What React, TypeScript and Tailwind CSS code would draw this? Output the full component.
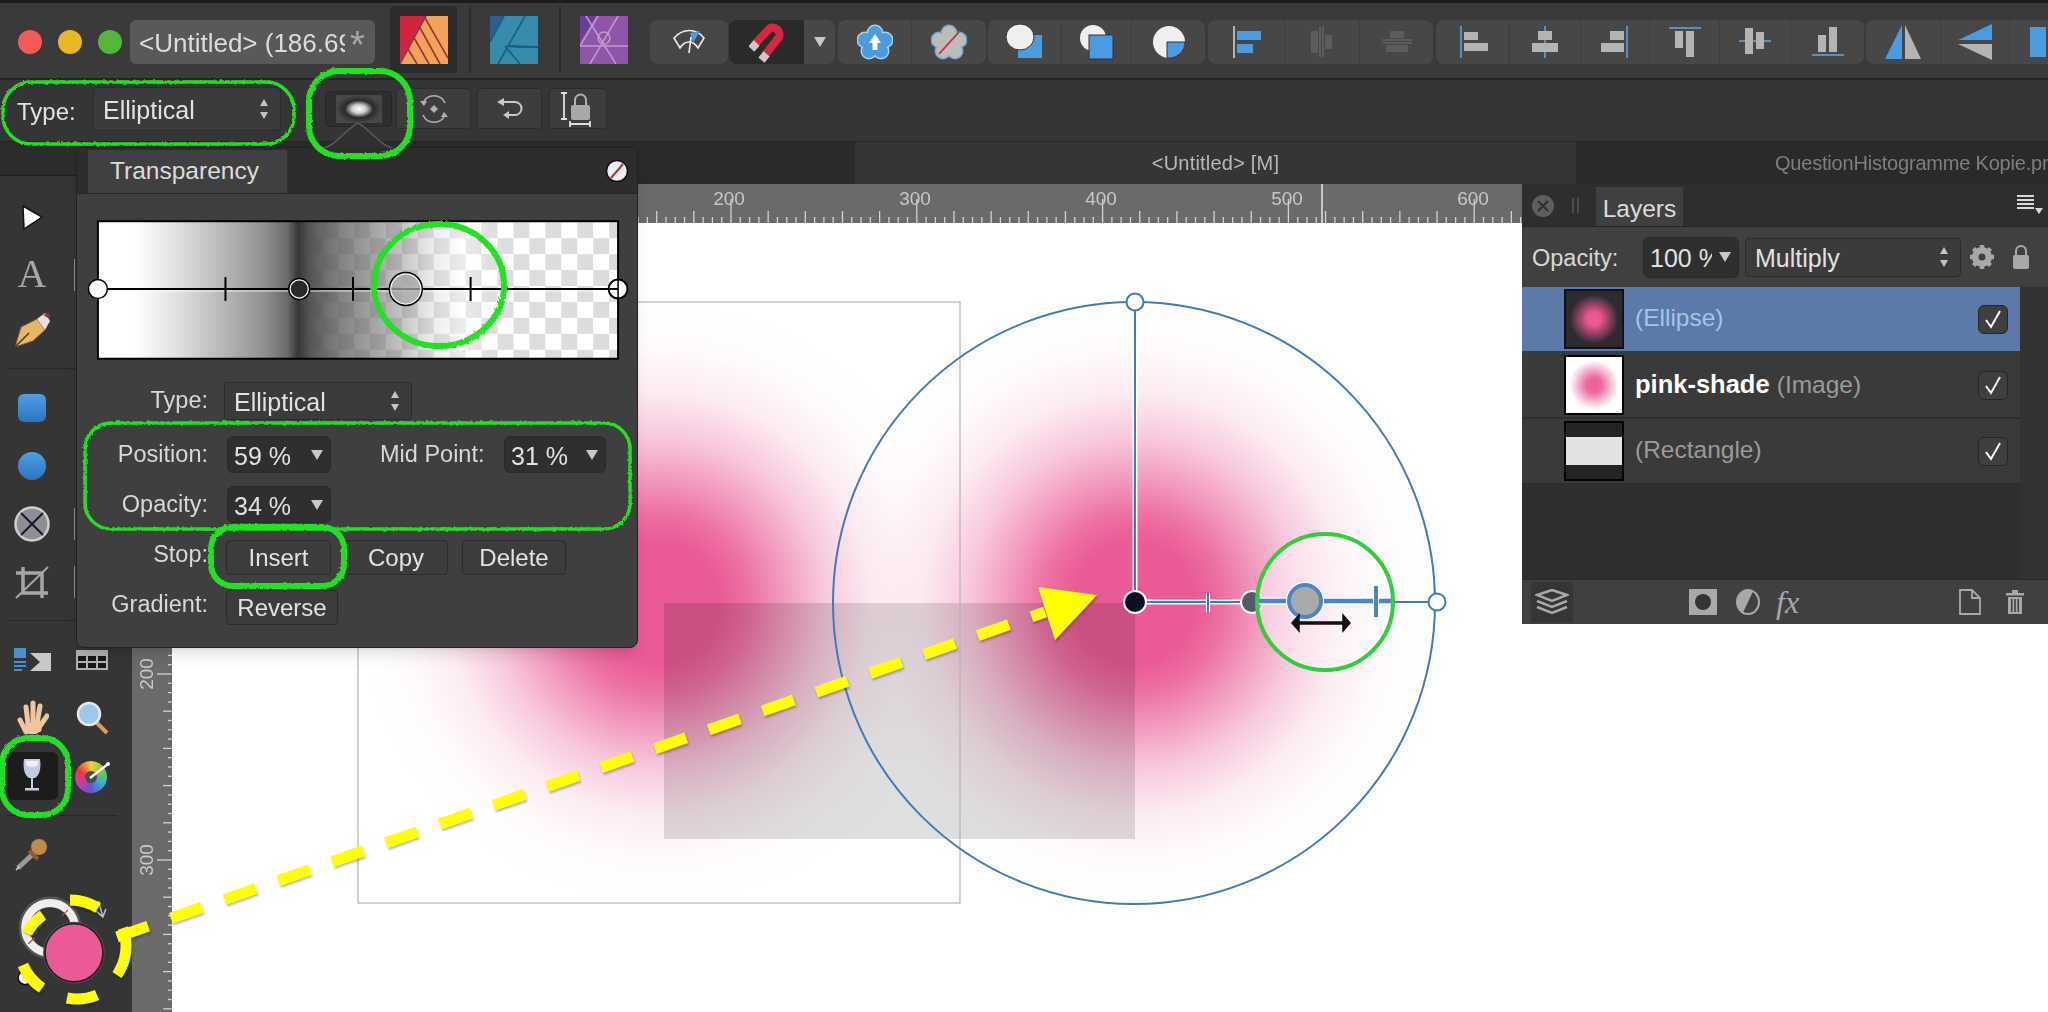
import React from 'react';

const BLUE = '#4a9be0';
const GREY = '#b4b4b4';
const DIM = '#5c5c5c';

const Tri = ({ className = '' }: { className?: string }) => (
    <svg width="12" height="10" viewBox="0 0 12 10" className={`shrink-0 ${className}`}><polygon points="0,0 12,0 6,10" fill="#c8c8c8" /></svg>
);

const UpDown = () => (
    <svg width="10" height="22" viewBox="0 0 10 22"><polygon points="5,1 9,8 1,8" fill="#c4c4c4" /><polygon points="1,14 9,14 5,21" fill="#c4c4c4" /></svg>
);

const Select = ({ label, className = '' }: { label: string; className?: string }) => (
    <div className={`flex items-center justify-between rounded bg-[#3b3b3b] border border-[#2b2b2b] pl-[9px] pr-[11px] text-[25px] text-[#e2e2e2] ${className}`}>
        <span className="pt-[4px]">{label}</span>
        <UpDown />
    </div>
);

const NumInput = ({ label, className = '', textClass = '' }: { label: string; className?: string; textClass?: string }) => (
    <div className={`flex items-center justify-between rounded-md bg-[#2f2f2f] border border-[#2a2a2a] pl-[6px] pr-[7px] text-[25px] text-[#e2e2e2] overflow-hidden whitespace-nowrap ${className}`}>
        <span className={`pt-[4px] overflow-hidden ${textClass}`}>{label}</span>
        <Tri />
    </div>
);

const Btn = ({ label, className = '' }: { label: string; className?: string }) => (
    <div className={`flex items-center justify-center rounded bg-[#3c3c3c] border border-[#2b2b2b] text-[24px] text-[#e2e2e2] h-[35px] ${className}`}>{label}</div>
);

const Group = ({ children, className = '' }: { children: React.ReactNode; className?: string }) => (
    <div className={`flex h-[44px] rounded-lg bg-[#474747] overflow-hidden shrink-0 divide-x divide-[#3c3c3c] ${className}`}>{children}</div>
);

const Cell = ({ children, className = '' }: { children?: React.ReactNode; className?: string }) => (
    <div className={`flex items-center justify-center h-full shrink-0 ${className}`}>{children}</div>
);

const Bars = ({ d, line, bar }: { d: string; line: string; bar: string }) => {
    // d: v-left, v-center, v-right, h-top, h-center, h-bottom
    const L = (x1: number, y1: number, x2: number, y2: number) => <line x1={x1} y1={y1} x2={x2} y2={y2} stroke={line} strokeWidth="2" />;
    const R = (x: number, y: number, w: number, h: number, i: number) => <rect key={i} x={x} y={y} width={w} height={h} fill={bar} />;
    const s: Record<string, React.ReactNode> = {
        vl: <>{L(5, 1, 5, 33)}{R(8, 7, 14, 8, 1)}{R(8, 18, 24, 8, 2)}</>,
        vc: <>{L(17, 1, 17, 33)}{R(10, 6, 14, 9, 1)}{R(4, 18, 26, 9, 2)}</>,
        vr: <>{L(29, 1, 29, 33)}{R(12, 6, 14, 9, 1)}{R(3, 18, 23, 9, 2)}</>,
        ht: <>{L(1, 3, 33, 3)}{R(7, 6, 8, 17, 1)}{R(18, 6, 8, 26, 2)}</>,
        hc: <>{L(1, 16, 33, 16)}{R(7, 3, 8, 26, 1)}{R(18, 7, 8, 17, 2)}</>,
        hb: <>{L(1, 30, 33, 30)}{R(7, 10, 8, 17, 1)}{R(18, 2, 8, 25, 2)}</>,
    };
    return <svg width="34" height="34" viewBox="0 0 34 34">{s[d]}</svg>;
};

const Flower = ({ fill, ring }: { fill: string; ring: string }) => (
    <>
        {[[18, 9], [28, 16], [24, 27], [12, 27], [8, 16]].map(([x, y], i) => (
            <circle key={i} cx={x} cy={y} r="8.5" fill={ring} />
        ))}
        {[[18, 9], [28, 16], [24, 27], [12, 27], [8, 16]].map(([x, y], i) => (
            <circle key={i} cx={x} cy={y} r="7" fill={fill} />
        ))}
        <circle cx="18" cy="19" r="9" fill={fill} />
    </>
);

const TopBar = () => (
    <div className="h-[78px] shrink-0 bg-[#3a3a3a] border-t-[3px] border-[#1c1c1c] flex items-start pt-[17px] overflow-hidden">
        <div className="flex gap-[16px] ml-[18px] mt-[10px] shrink-0">
            <div className="w-[24px] h-[24px] rounded-full bg-[#f35a56]" />
            <div className="w-[24px] h-[24px] rounded-full bg-[#e9b923]" />
            <div className="w-[24px] h-[24px] rounded-full bg-[#53b83a]" />
        </div>
        <div className="ml-[8px] w-[245px] h-[44px] rounded-md bg-[#595959] flex items-center pl-[9px] text-[26px] text-[#dcdcdc] overflow-hidden whitespace-nowrap shrink-0">
            <span className="w-[206px] pt-[2px] overflow-hidden shrink-0">&lt;Untitled&gt; (186.69</span>
            <span className="ml-[5px] text-[38px] leading-[38px] text-[#a8a8a8] mt-[6px]">*</span>
        </div>
        <div className="ml-[15px] -mt-[14px] w-[67px] h-[67px] rounded bg-[#2c2c2c] flex items-center justify-center shrink-0">
            <svg width="48" height="48" viewBox="0 0 48 48">
                <rect width="48" height="48" fill="#f4a15c" />
                <polygon points="0,0 26,0 0,48" fill="#d0243f" />
                <g stroke="#8c3a2e" strokeWidth="1.6">
                    <line x1="24" y1="0" x2="48" y2="42" /><line x1="19" y1="10" x2="40" y2="48" />
                    <line x1="13" y1="20" x2="29" y2="48" /><line x1="8" y1="33" x2="17" y2="48" />
                </g>
                <line x1="26" y1="0" x2="0" y2="48" stroke="#8c3a2e" strokeWidth="1.4" />
            </svg>
        </div>
        <div className="ml-[12px] -mt-[14px] w-[2px] h-[67px] bg-[#2c2c2c] shrink-0" />
        <svg width="48" height="48" viewBox="0 0 48 48" className="ml-[19px] -mt-[4px] shrink-0">
            <rect width="48" height="48" fill="#358cab" />
            <polygon points="0,0 14,0 0,24" fill="#2b5f96" />
            <g stroke="#1f5f7e" strokeWidth="1.8" fill="none">
                <line x1="35" y1="0" x2="8" y2="48" /><line x1="15" y1="30" x2="30" y2="48" />
                <polygon points="19,30 48,31 28,31" /><line x1="14" y1="0" x2="0" y2="26" />
            </g>
        </svg>
        <div className="ml-[21px] -mt-[14px] w-[2px] h-[67px] bg-[#2c2c2c] shrink-0" />
        <svg width="48" height="48" viewBox="0 0 48 48" className="ml-[19px] -mt-[4px] shrink-0">
            <rect width="48" height="48" fill="#8f55a8" />
            <polygon points="0,0 16,0 0,26" fill="#6a3e98" />
            <g stroke="#c39ad0" strokeWidth="1.5" fill="none">
                <line x1="38" y1="0" x2="10" y2="48" /><line x1="6" y1="0" x2="36" y2="48" />
                <line x1="0" y1="30" x2="48" y2="30" /><line x1="18" y1="0" x2="0" y2="30" /><circle cx="24" cy="22" r="6" />
            </g>
        </svg>
        <Group className="ml-[22px]">
            <Cell className="w-[78px]">
                <svg width="36" height="30" viewBox="0 0 36 30" fill="none" stroke="#eee" strokeWidth="1.6">
                    <path d="M3 11 C12 1 25 1 33 11 L27 21 C22 13 14 13 9 21 Z" />
                    <path d="M19 6 L29 4 L22 16" fill={BLUE} stroke="none" />
                    <line x1="20" y1="10" x2="18" y2="26" />
                </svg>
            </Cell>
        </Group>
        <Group className="ml-[1px] divide-x-0">
            <Cell className="w-[75px] bg-[#2a2a2a]">
                <svg width="36" height="42" viewBox="0 0 36 42" fill="none">
                    <path d="M6 26 L22 9 A7 7 0 0 1 31 18 L17 36" stroke="#d7263d" strokeWidth="8" transform="translate(-1 -2)" />
                    <rect x="1" y="21" width="8" height="8" fill="#d8c4c4" transform="rotate(43 5 25)" />
                    <rect x="11" y="32" width="8" height="8" fill="#d8c4c4" transform="rotate(40 15 36)" />
                </svg>
            </Cell>
            <Cell className="w-[31px]"><Tri /></Cell>
        </Group>
        <Group className="ml-[3px]">
            <Cell className="w-[74px]">
                <svg width="36" height="36" viewBox="0 0 36 36">
                    <Flower fill={BLUE} ring="#a8d0ef" />
                    <polygon points="18,10 24,19 20.5,19 20.5,26 15.5,26 15.5,19 12,19" fill="#fff" />
                </svg>
            </Cell>
            <Cell className="w-[74px]">
                <svg width="36" height="36" viewBox="0 0 36 36">
                    <Flower fill="#bcbcbc" ring="#6fa8d6" />
                    <line x1="8" y1="30" x2="28" y2="8" stroke="#c62d2d" strokeWidth="1.8" />
                </svg>
            </Cell>
        </Group>
        <Group className="ml-[2px]">
            <Cell className="w-[74px]">
                <svg width="38" height="36" viewBox="0 0 38 36">
                    <rect x="12" y="11" width="24" height="23" fill={BLUE} />
                    <ellipse cx="14" cy="13" rx="14" ry="13" fill="#efefef" stroke="#333" strokeWidth="1" />
                </svg>
            </Cell>
            <Cell className="w-[70px]">
                <svg width="38" height="36" viewBox="0 0 38 36">
                    <circle cx="15" cy="14" r="13" fill="#efefef" />
                    <rect x="11" y="11" width="24" height="24" fill={BLUE} stroke="#333" strokeWidth="1" />
                </svg>
            </Cell>
            <Cell className="w-[73px]">
                <svg width="36" height="36" viewBox="0 0 36 36">
                    <circle cx="18" cy="18" r="16" fill="#efefef" />
                    <path d="M16 18 H34 A16 16 0 0 1 16 34 Z" fill={BLUE} stroke="#333" strokeWidth="1" />
                </svg>
            </Cell>
        </Group>
        <Group className="ml-[3px]">
            <Cell className="w-[77px]">
                <svg width="34" height="36" viewBox="0 0 34 36">
                    <line x1="5" y1="2" x2="5" y2="34" stroke={GREY} strokeWidth="2" />
                    <rect x="8" y="7" width="24" height="9" fill={BLUE} /><rect x="8" y="20" width="16" height="9" fill={BLUE} />
                </svg>
            </Cell>
            <Cell className="w-[75px]">
                <svg width="34" height="34" viewBox="0 0 34 34" fill={DIM}>
                    <rect x="6" y="6" width="7" height="22" /><rect x="20" y="10" width="7" height="14" />
                    <line x1="15" y1="2" x2="15" y2="32" stroke={DIM} strokeWidth="2" /><line x1="18" y1="2" x2="18" y2="32" stroke={DIM} strokeWidth="2" />
                </svg>
            </Cell>
            <Cell className="w-[73px]">
                <svg width="34" height="34" viewBox="0 0 34 34" fill={DIM}>
                    <rect x="10" y="6" width="14" height="7" /><rect x="6" y="20" width="22" height="7" />
                    <line x1="2" y1="15" x2="32" y2="15" stroke={DIM} strokeWidth="2" /><line x1="2" y1="18" x2="32" y2="18" stroke={DIM} strokeWidth="2" />
                </svg>
            </Cell>
        </Group>
        <Group className="ml-[3px]">
            <Cell className="w-[74px]"><Bars d="vl" line="#5d8fbd" bar={GREY} /></Cell>
            <Cell className="w-[71px]"><Bars d="vc" line="#5d8fbd" bar={GREY} /></Cell>
            <Cell className="w-[69px]"><Bars d="vr" line="#5d8fbd" bar={GREY} /></Cell>
            <Cell className="w-[70px]"><Bars d="ht" line="#5d8fbd" bar={GREY} /></Cell>
            <Cell className="w-[71px]"><Bars d="hc" line="#5d8fbd" bar={GREY} /></Cell>
            <Cell className="w-[73px]"><Bars d="hb" line="#5d8fbd" bar={GREY} /></Cell>
        </Group>
        <Group className="ml-[2px]">
            <Cell className="w-[75px]">
                <svg width="38" height="36" viewBox="0 0 38 36"><polygon points="18,1 18,35 1,35" fill={BLUE} /><polygon points="21,1 21,35 37,35" fill={GREY} /></svg>
            </Cell>
            <Cell className="w-[69px]">
                <svg width="36" height="38" viewBox="0 0 36 38"><polygon points="35,1 35,17 1,17" fill={BLUE} /><polygon points="35,21 35,37 1,21" fill={GREY} /></svg>
            </Cell>
            <Cell className="w-[60px] justify-start pl-[20px]">
                <div className="w-[16px] h-[30px] bg-[#4a9be0]" />
            </Cell>
        </Group>
    </div>
);

const ContextBar = () => (
    <div className="h-[63px] shrink-0 bg-[#353535] border-t-2 border-[#242424] flex items-start overflow-hidden">
        <span className="ml-[17px] mt-[14px] text-[24px] text-[#e2e2e2] w-[60px] shrink-0">Type:</span>
        <Select label="Elliptical" className="ml-[16px] mt-[7px] w-[188px] h-[44px] shrink-0" />
        <div className="ml-[44px] mt-[11px] w-[67px] h-[36px] rounded-sm bg-[#2e2e2e] border border-[#262626] flex items-center justify-center shrink-0">
            <div className="w-[46px] h-[28px] bg-[radial-gradient(ellipse_closest-side,#fff_0%,#cfcfcf_30%,#2a2a2a_62%,#484848_100%)]" />
        </div>
        {['w-[75px] ml-[4px]', 'w-[65px] ml-[6px]', 'w-[58px] ml-[7px]'].map((c, i) => (
            <div key={i} className={`h-[41px] mt-[8px] rounded bg-[#3d3d3d] border border-[#2b2b2b] flex items-center justify-center shrink-0 ${c}`}>
                {i === 0 && (
                    <svg width="30" height="34" viewBox="0 0 30 34" fill="none" stroke="#b0b0b0" strokeWidth="1.6">
                        <path d="M4 11 A12 12 0 0 1 26 11" /><path d="M26 23 A12 12 0 0 1 4 23" />
                        <polygon points="15,13 19,17 15,21 11,17" fill="#b0b0b0" stroke="none" />
                        <polygon points="1,9 8,9 5,14" fill="#b0b0b0" stroke="none" /><polygon points="29,25 22,25 25,20" fill="#b0b0b0" stroke="none" />
                    </svg>
                )}
                {i === 1 && (
                    <svg width="30" height="26" viewBox="0 0 30 26" fill="none" stroke="#c8c8c8" strokeWidth="2">
                        <path d="M8 6 H20 A6.5 6.5 0 0 1 20 19 H13" /><polygon points="2,6 9,2 9,10" fill="#c8c8c8" stroke="none" /><polygon points="8,19 14,15 14,23" fill="#c8c8c8" stroke="none" />
                    </svg>
                )}
                {i === 2 && (
                    <svg width="36" height="36" viewBox="0 0 36 36" fill="none">
                        <path d="M4 2 V28 M1 2 H7 M1 28 H7" stroke="#e0e0e0" strokeWidth="1.8" />
                        <path d="M15 14 V9 A5.5 5.5 0 0 1 26 9 V14" stroke="#b0b0b0" strokeWidth="2" />
                        <rect x="11" y="14" width="19" height="15" rx="2" fill="#a8a8a8" />
                        <path d="M10 33 H30 M10 30 V36 M30 30 V36" stroke="#e0e0e0" strokeWidth="1.8" />
                    </svg>
                )}
            </div>
        ))}
    </div>
);

const TabBar = () => (
    <div className="h-[43px] shrink-0 flex border-t border-[#262626] bg-[#2a2a2a] text-[20px]">
        <div className="w-[132px] shrink-0">
            <div className="h-[34px] bg-[#2c2c2c] border-b border-[#1f1f1f]" />
            <div className="h-[9px] bg-[#353535]" />
        </div>
        <div className="w-[723px] shrink-0 bg-[#2a2a2a]" />
        <div className="w-[721px] shrink-0 bg-[#353535] flex items-center justify-center text-[#b8b8b8] tracking-[0.2px]">&lt;Untitled&gt; [M]</div>
        <div className="flex-1 flex items-center pl-[199px] text-[#7f7f7f] whitespace-nowrap overflow-hidden tracking-[-0.2px]">QuestionHistogramme Kopie.pr</div>
    </div>
);

const Tool = ({ children, className = '', menu = false }: { children?: React.ReactNode; className?: string; menu?: boolean }) => (
    <div className={`relative flex items-center justify-center ${className}`}>
        {children}
        {menu && <div className="absolute left-[74px] top-[13px] w-px h-[32px] bg-[#8c8c8c]" />}
    </div>
);

const Tools = () => (
    <div className="w-[132px] shrink-0 bg-[#353535] flex flex-col pt-[6px]">
        <Tool className="w-[64px] h-[56px]">
            <svg width="24" height="28" viewBox="0 0 24 28"><polygon points="3,2 22,13 4,25" fill="#fff" stroke="#111" strokeWidth="1.5" /></svg>
        </Tool>
        <Tool className="w-[64px] h-[56px]" menu>
            <span className="font-['Liberation_Serif',serif] text-[40px] text-[#a8a8a8] leading-none">A</span>
        </Tool>
        <Tool className="w-[64px] h-[56px]">
            <svg width="38" height="38" viewBox="0 0 38 38">
                <path d="M2 36 L8 16 L24 8 L32 19 L20 30 Z" fill="#e8b668" stroke="#7a5a25" strokeWidth="1" />
                <line x1="2" y1="36" x2="16" y2="22" stroke="#4a3312" strokeWidth="1.4" />
                <path d="M24 8 L32 2 L37 10 L32 19 Z" fill="#e8e0d8" /><path d="M30 4 L36 2 L37 8 Z" fill="#a03030" />
            </svg>
        </Tool>
        <div className="mt-[11px] ml-[7px] w-[68px] h-px bg-[#262626]" />
        <Tool className="w-[64px] h-[58px] mt-[10px]"><div className="w-[28px] h-[28px] rounded-md bg-linear-to-b from-[#4d9fe6] to-[#2c74be]" /></Tool>
        <Tool className="w-[64px] h-[58px]"><div className="w-[28px] h-[28px] rounded-full bg-linear-to-b from-[#4d9fe6] to-[#2c74be]" /></Tool>
        <Tool className="w-[64px] h-[58px]" menu>
            <svg width="36" height="36" viewBox="0 0 36 36"><circle cx="18" cy="18" r="16.5" fill="#8e8e96" stroke="#cfcfcf" strokeWidth="2.5" /><path d="M7 7 L29 29 M29 7 L7 29" stroke="#16182c" strokeWidth="2" /></svg>
        </Tool>
        <Tool className="w-[64px] h-[58px]" menu>
            <svg width="34" height="34" viewBox="0 0 34 34" fill="none" stroke="#a6a6a6" strokeWidth="3.5"><path d="M8 2 V28 H33 M1 8 H27 V33" /><line x1="1" y1="33" x2="33" y2="2" strokeWidth="2" /></svg>
        </Tool>
        <div className="mt-[9px] ml-[7px] w-[68px] h-px bg-[#262626]" />
        <div className="grid grid-cols-[64px_56px] auto-rows-[58px] mt-[10px]">
            <Tool>
                <svg width="38" height="24" viewBox="0 0 38 24" fill="none">
                    <g fill="#4a8fd0"><rect x="1" y="0" width="12" height="10" /><rect x="1" y="13" width="12" height="2" /><rect x="1" y="17" width="12" height="2" /><rect x="1" y="21" width="8" height="2" /></g>
                    <path d="M17 5 H38 V23 H17 L27 14 Z" fill="#c8c8c8" />
                </svg>
            </Tool>
            <Tool>
                <svg width="32" height="20" viewBox="0 0 32 20"><rect width="32" height="20" fill="#b0b0b0" /><g fill="#181818">{[0, 1, 2].map(c => [0, 1].map(r => <rect key={`${c}${r}`} x={2 + c * 10} y={6 + r * 7} width="8" height="5" />))}</g></svg>
            </Tool>
            <Tool>
                <svg width="34" height="36" viewBox="0 0 34 36" fill="none" strokeLinecap="round" stroke="#efc6a0">
                    <path d="M11 32 L5 20" strokeWidth="5" /><path d="M13 24 L11 7" strokeWidth="5" /><path d="M18 24 L18 3" strokeWidth="5" /><path d="M22 24 L25 6" strokeWidth="5" /><path d="M25 26 L32 16" strokeWidth="5" />
                    <path d="M12 24 H25 V30 Q20 34 12 32 Z" fill="#efc6a0" strokeWidth="3" />
                </svg>
            </Tool>
            <Tool>
                <svg width="34" height="34" viewBox="0 0 34 34" fill="none"><line x1="21" y1="21" x2="32" y2="32" stroke="#d89a60" strokeWidth="4" /><circle cx="14" cy="13" r="11" fill="#9cc8ee" stroke="#e8e8e8" strokeWidth="2.5" /></svg>
            </Tool>
            <Tool>
                <div className="w-[52px] h-[48px] rounded-md bg-[#1c1c1c] flex items-center justify-center">
                    <svg width="22" height="36" viewBox="0 0 22 36">
                        <path d="M3 1 H19 Q21 16 14 20 H8 Q1 16 3 1 Z" fill="#c5cbe0" /><path d="M5 3 H17 Q18 9 11 9 Q4 9 5 3 Z" fill="#eef0f8" />
                        <rect x="10" y="20" width="2" height="11" fill="#c5cbe0" /><rect x="4" y="30" width="14" height="2.5" fill="#c5cbe0" />
                    </svg>
                </div>
            </Tool>
            <Tool>
                <div className="relative w-[34px] h-[34px]">
                    <div className="w-[32px] h-[32px] mt-[2px] rounded-full bg-[conic-gradient(#f2d13c,#7cc440,#35b0d8,#5a5ad0,#c83aa8,#e83a3a,#f2d13c)]" />
                    <svg width="38" height="34" viewBox="0 0 38 34" className="absolute top-0 left-0"><circle cx="16" cy="18" r="6" fill="#4a4a4a" /><line x1="15" y1="19" x2="33" y2="5" stroke="#fff" strokeWidth="2.5" /><circle cx="33" cy="5" r="2" fill="#fff" /></svg>
                </div>
            </Tool>
        </div>
        <div className="mt-[10px] ml-[7px] w-[110px] h-px bg-[#262626]" />
        <Tool className="w-[64px] h-[56px] mt-[10px]">
            <svg width="34" height="34" viewBox="0 0 34 34">
                <line x1="3" y1="31" x2="18" y2="17" stroke="#9a9a9a" strokeWidth="5" /><line x1="1" y1="33" x2="4" y2="30" stroke="#ddd" strokeWidth="1.5" />
                <circle cx="24" cy="10" r="8" fill="#c08a4a" /><line x1="14" y1="14" x2="23" y2="22" stroke="#8a5f2a" strokeWidth="4" />
            </svg>
        </Tool>
        <svg viewBox="0 883 132 129" className="w-[132px] h-[129px] mt-[2px] block">
            <circle cx="25" cy="978" r="7" fill="#fff" stroke="#111" strokeWidth="1.5" />
            <circle cx="50" cy="928" r="26" fill="none" stroke="#555" strokeWidth="11" />
            <circle cx="50" cy="928" r="25" fill="none" stroke="#efefef" strokeWidth="8" />
            <path d="M28 944 L35 938 M68 910 L62 916" stroke="#b34a4a" strokeWidth="1.2" />
            <path d="M88 902 L99 902 L103 917 M106 909 L103 917 L96 911" fill="none" stroke="#bdbdbd" strokeWidth="1.5" />
            <circle cx="74" cy="953" r="31" fill="#4c4c4c" />
            <circle cx="74" cy="953" r="29" fill="#ea5a96" stroke="#1d1d1d" strokeWidth="1.5" />
        </svg>
    </div>
);

const range = (from: number, to: number, step: number) => {
    const out: number[] = [];
    for (let v = from; v <= to; v += step) out.push(v);
    return out;
};

const TopRuler = () => (
    <svg viewBox="172 184 1350 39" className="block w-[1350px] h-[39px] bg-[#6a6a6a] shrink-0">
        {range(0, 146, 1).map(i => {
            const x = 731 - 60 * 9.29 + i * 9.29;
            const len = i % 20 === 0 ? 24 : i % 4 === 0 ? 12 : 6;
            return <line key={i} x1={x} x2={x} y1={223 - len} y2={223} stroke="#d2d2d2" strokeWidth="1.3" />;
        })}
        {[200, 300, 400, 500, 600].map((v, i) => (
            <text key={v} x={729 + i * 186} y={205} textAnchor="middle" fontSize="19" fill="#c8c8c8" fontFamily="'Liberation Sans',sans-serif">{v}</text>
        ))}
        <line x1="1322" x2="1322" y1="184" y2="223" stroke="#e6e6e6" strokeWidth="1.5" />
    </svg>
);

const LeftRuler = () => (
    <svg viewBox="132 223 40 789" className="block w-[40px] h-[789px] bg-[#6a6a6a] shrink-0">
        {range(0, 85, 1).map(i => {
            const y = 674 - 48 * 9.3 + i * 9.3;
            const len = (i - 8) % 20 === 0 ? 15 : (i - 8) % 4 === 0 ? 9 : 4;
            return <line key={i} x1={172 - len} x2={172} y1={y} y2={y} stroke="#d2d2d2" strokeWidth="1.3" />;
        })}
        {[[200, 674], [300, 860]].map(([v, y]) => (
            <text key={v} x={146} y={y} textAnchor="middle" dominantBaseline="central" fontSize="19" fill="#c8c8c8" fontFamily="'Liberation Sans',sans-serif" transform={`rotate(-90 146 ${y})`}>{v}</text>
        ))}
    </svg>
);

const Canvas = () => (
    <svg viewBox="172 223 1350 789" className="block w-[1350px] h-[789px] bg-white shrink-0">
        <defs>
            <radialGradient id="pink">
                {[[0, 1], [0.2, 1], [0.3, 0.86], [0.4, 0.64], [0.55, 0.33], [0.7, 0.12], [0.85, 0.025], [1, 0]].map(([o, a]) => (
                    <stop key={o} offset={o} stopColor="#ea5a96" stopOpacity={a} />
                ))}
            </radialGradient>
        </defs>
        <circle cx="659" cy="603" r="301" fill="url(#pink)" />
        <circle cx="1134" cy="603" r="301" fill="url(#pink)" />
        <rect x="664" y="603" width="471" height="236" fill="#dfdfdf" className="mix-blend-multiply" />
        <rect x="358" y="302" width="602" height="601" fill="none" stroke="#b4b4b4" strokeWidth="1.2" />
        <circle cx="1134" cy="603" r="301" fill="none" stroke="#3f7cb8" strokeWidth="2" />
        <path d="M1135 302 V602 H1437" fill="none" stroke="#fff" strokeWidth="5" />
        <path d="M1135 302 V602 H1437" fill="none" stroke="#3f7cb8" strokeWidth="2" />
        <path d="M1208 593 V612" stroke="#fff" strokeWidth="4" /><path d="M1208 593 V612" stroke="#3f7cb8" strokeWidth="2" />
        <circle cx="1135" cy="302" r="8.5" fill="#fff" stroke="#3f7cb8" strokeWidth="2" />
        <circle cx="1135" cy="602" r="12" fill="#fff" /><circle cx="1135" cy="602" r="10" fill="#0a0f24" />
        <circle cx="1252" cy="602" r="12" fill="#fff" /><circle cx="1252" cy="602" r="10" fill="#565a66" />
        <circle cx="1325" cy="602" r="68" fill="#fff" fillOpacity="0.45" />
        <path d="M1258 601 H1394" stroke="#fff" strokeWidth="7" /><path d="M1258 601 H1394" stroke="#4a86c8" strokeWidth="4.5" />
        <circle cx="1305" cy="601" r="19" fill="#fff" /><circle cx="1305" cy="601" r="16" fill="#aaaaaa" stroke="#4a86c8" strokeWidth="4" />
        <path d="M1376 586 V617" stroke="#fff" strokeWidth="6" /><path d="M1376 586 V617" stroke="#4a86c8" strokeWidth="4" />
        <circle cx="1437" cy="602" r="8.5" fill="#fff" stroke="#3f7cb8" strokeWidth="2" />
        <path d="M1296 623 H1346" stroke="#111" strokeWidth="3.5" />
        <path d="M1292 623 L1299 615 V631 Z M1350 623 L1343 615 V631 Z" fill="#111" stroke="#111" strokeWidth="1.5" />
    </svg>
);

const Row = ({ label, className = '', labelClass = '', children }: { label: string; className?: string; labelClass?: string; children: React.ReactNode }) => (
    <div className={`flex items-center ${className}`}>
        <div className={`w-[131px] text-right text-[23.5px] text-[#d8d8d8] shrink-0 ${labelClass}`}>{label}</div>
        {children}
    </div>
);

const Popover = () => (
    <div className="absolute left-[76px] top-[147px] w-[562px] h-[501px] bg-[#3f3f3f] rounded-lg border border-[#222] shadow-lg">
        <svg viewBox="0 0 80 26" className="absolute left-[241px] -top-[25px] w-[80px] h-[26px]">
            <path d="M0 26 C16 26 30 4 40 0 C50 4 64 26 80 26 Z" fill="#303030" stroke="#5a5a5a" strokeWidth="1.5" />
        </svg>
        <div className="h-[46px] bg-[#2d2d2d] rounded-t-lg flex items-end border-b border-[#262626] relative">
            <div className="ml-[11px] w-[199px] h-[43px] bg-[#404040] flex items-center pl-[22px] text-[24.5px] text-[#dcdcdc]">Transparency</div>
            <svg width="24" height="24" viewBox="0 0 24 24" className="absolute left-[528px] top-[11px]">
                <circle cx="12" cy="12" r="10.5" fill="#eee" stroke="#111" strokeWidth="1.5" /><line x1="6" y1="19" x2="18" y2="5" stroke="#b03030" strokeWidth="2" />
            </svg>
        </div>
        <svg viewBox="76 194 562 182" className="block w-[560px] h-[182px]">
            <defs>
                <pattern id="check" x="98" y="222" width="32" height="32" patternUnits="userSpaceOnUse">
                    <rect width="32" height="32" fill="#fff" /><rect width="16" height="16" fill="#dcdcdc" /><rect x="16" y="16" width="16" height="16" fill="#dcdcdc" />
                </pattern>
                <linearGradient id="fade">
                    {([[0, '#fff', 1], [0.07, '#fff', 1], [0.14, '#e6e6e6', 1], [0.24, '#b8b8b8', 1], [0.32, '#909090', 1], [0.365, '#6a6a6a', 1], [0.385, '#363636', 1], [0.405, '#4a4a4a', 0.95], [0.45, '#5a5a5a', 0.82], [0.54, '#707070', 0.6], [0.59, '#7a7a7a', 0.42], [0.64, '#ccc', 0.4], [0.7, '#fff', 0.45], [0.76, '#fff', 0.05], [1, '#fff', 0]] as [number, string, number][]).map(([o, c, a]) => (
                        <stop key={o} offset={o} stopColor={c} stopOpacity={a} />
                    ))}
                </linearGradient>
            </defs>
            <rect x="97" y="221" width="522" height="138" fill="url(#check)" />
            <rect x="97" y="221" width="522" height="138" fill="url(#fade)" stroke="#000" strokeWidth="2" />
            <line x1="97" y1="289" x2="619" y2="289" stroke="#000" strokeWidth="2" />
            <line x1="97" y1="291" x2="619" y2="291" stroke="#fff" strokeOpacity="0.4" strokeWidth="2" />
            {[225, 353, 471].map(x => <line key={x} x1={x} x2={x} y1="277" y2="301" stroke="#000" strokeWidth="2" />)}
            <circle cx="97" cy="289" r="9.5" fill="#fff" stroke="#000" strokeWidth="1.5" />
            <circle cx="299" cy="289" r="9.5" fill="#2a2a2a" stroke="#fff" strokeWidth="2" /><circle cx="299" cy="289" r="10.5" fill="none" stroke="#000" strokeWidth="1.5" />
            <circle cx="406" cy="289" r="15.5" fill="#aaa" fillOpacity="0.75" stroke="#fff" strokeWidth="2" /><circle cx="406" cy="289" r="16.5" fill="none" stroke="#000" strokeWidth="1.5" />
            <circle cx="619" cy="289" r="9.5" fill="#fff" stroke="#000" strokeWidth="2" />
            <line x1="610" y1="289" x2="619" y2="289" stroke="#000" strokeWidth="2" /><line x1="619" y1="280" x2="619" y2="298" stroke="#000" strokeWidth="1.5" />
        </svg>
        <Row label="Type:" className="mt-[6px] h-[38px]">
            <Select label="Elliptical" className="ml-[16px] w-[188px] h-[38px]" />
        </Row>
        <Row label="Position:" className="mt-[16px] h-[37px]">
            <NumInput label="59 %" className="ml-[19px] w-[104px] h-[37px]" />
            <div className="ml-[49px] text-[23.5px] text-[#d8d8d8] w-[104px] whitespace-nowrap">Mid Point:</div>
            <NumInput label="31 %" className="ml-[20px] w-[102px] h-[37px]" />
        </Row>
        <Row label="Opacity:" className="mt-[13px] h-[37px]">
            <NumInput label="34 %" className="ml-[19px] w-[104px] h-[37px]" />
        </Row>
        <Row label="Stop:" labelClass="-mt-[5px]" className="mt-[17px] h-[35px]">
            <Btn label="Insert" className="ml-[18px] w-[105px]" />
            <Btn label="Copy" className="ml-[13px] w-[104px]" />
            <Btn label="Delete" className="ml-[14px] w-[104px]" />
        </Row>
        <Row label="Gradient:" labelClass="-mt-[5px]" className="mt-[15px] h-[35px]">
            <Btn label="Reverse" className="ml-[18px] w-[112px]" />
        </Row>
    </div>
);

const LayerRow = ({ thumb, name, kind, selected }: { thumb: string; name?: string; kind: string; selected?: boolean }) => (
    <div className={`h-[66px] flex items-center border-b-2 ${selected ? 'bg-[#5a7ba8] border-[#2c3c55]' : 'bg-[#3a3a3a] border-[#2e2e2e]'}`}>
        <div className={`ml-[42px] w-[60px] h-[60px] shrink-0 border-2 ${selected ? 'border-[#0c1020]' : 'border-black'} ${thumb}`} />
        <div className="ml-[11px] flex-1 text-[24.5px] whitespace-nowrap -mt-[2px]">
            {name && <span className="font-bold text-white text-[25.5px]">{name} </span>}
            <span className={selected ? 'text-[#a9c3e6]' : 'text-[#9a9a9a]'}>{kind}</span>
        </div>
        <div className="mr-[12px] w-[30px] h-[29px] rounded-md bg-[#3f3f3f] border border-[#262626] flex items-center justify-center">
            <svg width="20" height="20" viewBox="0 0 20 20" fill="none" stroke="#fff" strokeWidth="2"><path d="M3 11 L8 18 L17 2" /></svg>
        </div>
    </div>
);

const Layers = () => (
    <div className="w-[526px] h-[440px] shrink-0 bg-[#2f2f2f] flex flex-col">
        <div className="h-[43px] shrink-0 relative flex items-end bg-[#2e2e2e] border-b border-[#262626]">
            <svg width="24" height="24" viewBox="0 0 24 24" className="absolute left-[9px] top-[10px]">
                <circle cx="12" cy="12" r="11" fill="#5e5e5e" /><path d="M7 7 L17 17 M17 7 L7 17" stroke="#2e2e2e" strokeWidth="2" />
            </svg>
            <div className="absolute left-[50px] top-[14px] w-[7px] h-[15px] border-x-2 border-[#4c4c4c]" />
            <div className="ml-[74px] w-[87px] h-[39px] bg-[#404040] flex items-center justify-center pt-[6px] text-[24.5px] text-[#dcdcdc]">Layers</div>
            <svg width="34" height="26" viewBox="0 0 34 26" className="absolute right-[1px] top-[8px]" fill="#d8d8d8">
                <rect x="4" y="3" width="17" height="2" /><rect x="4" y="7" width="17" height="2" /><rect x="4" y="11" width="17" height="2" /><rect x="4" y="15" width="17" height="2" />
                <polygon points="22,16 30,16 26,22" />
            </svg>
        </div>
        <div className="h-[60px] shrink-0 bg-[#404040] flex items-center">
            <span className="ml-[10px] w-[87px] pt-[3px] text-[23.5px] text-[#d8d8d8]">Opacity:</span>
            <NumInput label="100 %" textClass="w-[62px] shrink-0" className="ml-[24px] w-[96px] h-[41px]" />
            <Select label="Multiply" className="ml-[6px] w-[216px] h-[39px]" />
            <svg width="26" height="26" viewBox="0 0 26 26" className="ml-[8px]">
                <circle cx="13" cy="13" r="7.5" fill="none" stroke="#a8a8a8" strokeWidth="5" />
                <g stroke="#a8a8a8" strokeWidth="4.5">
                    <line x1="13" y1="1" x2="13" y2="25" /><line x1="1" y1="13" x2="25" y2="13" /><line x1="4.5" y1="4.5" x2="21.5" y2="21.5" /><line x1="21.5" y1="4.5" x2="4.5" y2="21.5" />
                </g>
                <circle cx="13" cy="13" r="6" fill="#a8a8a8" /><circle cx="13" cy="13" r="3.5" fill="#404040" />
            </svg>
            <svg width="18" height="26" viewBox="0 0 18 26" className="ml-[17px]">
                <path d="M4 12 V7 A5 5 0 0 1 14 7 V12" fill="none" stroke="#a8a8a8" strokeWidth="2" /><rect x="1" y="11" width="16" height="14" rx="2" fill="#a8a8a8" />
            </svg>
        </div>
        <div className="flex-1 flex">
            <div className="w-[498px] flex flex-col">
                <LayerRow selected thumb="bg-[radial-gradient(circle,#ee5b98_0%,#e8558f_18%,#2d2b2e_62%)]" kind="(Ellipse)" />
                <LayerRow thumb="bg-[radial-gradient(circle,#ee5b98_0%,#ee6aa2_20%,#ffffff_62%)]" name="pink-shade" kind="(Image)" />
                <LayerRow thumb="bg-[linear-gradient(#242424_25%,#e2e2e2_25%,#e2e2e2_75%,#242424_75%)]" kind="(Rectangle)" />
            </div>
            <div className="flex-1 bg-[#333]" />
        </div>
        <div className="h-[45px] shrink-0 bg-[#404040] border-t border-[#2a2a2a] flex items-center relative">
            <div className="ml-[9px] w-[42px] h-[40px] bg-[#353535] flex items-center justify-center">
                <svg width="34" height="26" viewBox="0 0 34 26" fill="none" stroke="#a8a8a8" strokeWidth="2.5"><path d="M2 6 L17 1 L32 6 L17 12 Z" /><path d="M2 12 L17 18 L32 12" /><path d="M2 18 L17 24 L32 18" /></svg>
            </div>
            <svg width="28" height="26" viewBox="0 0 28 26" className="ml-[116px]"><rect width="28" height="26" fill="#a8a8a8" /><circle cx="14" cy="13" r="8" fill="#353535" /></svg>
            <svg width="26" height="26" viewBox="0 0 26 26" className="ml-[18px]">
                <ellipse cx="13" cy="13" rx="11" ry="12" fill="#404040" stroke="#a8a8a8" strokeWidth="2" /><path d="M18 2.5 L8 23.5 A11 12 0 0 1 13 1 Z" fill="#a8a8a8" />
            </svg>
            <span className="ml-[15px] font-['Liberation_Serif',serif] italic text-[32px] text-[#a8a8a8] leading-none">fx</span>
            <svg width="22" height="26" viewBox="0 0 22 26" fill="none" stroke="#a8a8a8" strokeWidth="1.8" className="ml-[160px]"><path d="M1 1 H13 L21 9 V25 H1 Z M13 1 V9 H21" /></svg>
            <svg width="20" height="26" viewBox="0 0 20 26" fill="#a8a8a8" className="ml-[24px]"><rect x="1" y="4" width="18" height="2.5" /><rect x="7" y="1" width="6" height="3" /><path d="M3 8 H17 V25 H3 Z M6 10 V23 H7.5 V10 Z M9.2 10 V23 H10.8 V10 Z M12.5 10 V23 H14 V10 Z" fillRule="evenodd" /></svg>
        </div>
    </div>
);

const Marks = () => (
    <svg viewBox="0 0 2048 1012" className="absolute inset-0 w-[2048px] h-[1012px] pointer-events-none">
        <defs>
            <filter id="rough" x="-10%" y="-10%" width="120%" height="120%">
                <feTurbulence type="fractalNoise" baseFrequency="0.3" numOctaves="2" result="n" />
                <feDisplacementMap in="SourceGraphic" in2="n" scale="3" />
            </filter>
            <filter id="soft" x="-10%" y="-10%" width="120%" height="120%">
                <feDropShadow dx="1" dy="2" stdDeviation="1.2" floodColor="#000" floodOpacity="0.3" />
            </filter>
        </defs>
        <g fill="none" stroke="#22e122" filter="url(#rough)">
            <rect x="3" y="82" width="291" height="62" rx="28" strokeWidth="3.5" />
            <rect x="309" y="71" width="101" height="85" rx="30" strokeWidth="6" />
            <rect x="85" y="423" width="545" height="106" rx="26" strokeWidth="3.5" />
            <rect x="211" y="527" width="133" height="59" rx="22" strokeWidth="6" />
            <ellipse cx="439" cy="285" rx="65" ry="61" strokeWidth="6" />
            <rect x="2" y="738" width="66" height="77" rx="26" strokeWidth="6" />
        </g>
        <circle cx="1325" cy="602" r="68" fill="none" stroke="#2ecf3a" strokeWidth="4" />
        <g filter="url(#soft)">
            <line x1="117" y1="937" x2="1045" y2="612" stroke="#ffff00" strokeWidth="11" strokeDasharray="33 24" />
            <polygon points="1097,595 1038,587 1055,640" fill="#ffff00" />
            <g fill="none" stroke="#ffff00" strokeWidth="11">
                <path d="M70 900 A52 52 0 0 1 98 908" />
                <path d="M123 928 A52 52 0 0 1 117 975" />
                <path d="M67 998 A52 52 0 0 0 97 995" />
                <path d="M23 965 A52 52 0 0 0 42 988" />
                <path d="M43 915 A52 52 0 0 0 27 933" />
            </g>
        </g>
    </svg>
);

export default function App() {
    return (
        <div className="relative w-[2048px] h-[1012px] overflow-hidden flex flex-col bg-white font-['Liberation_Sans',Arial,sans-serif]">
            <TopBar />
            <ContextBar />
            <TabBar />
            <div className="flex-1 flex min-h-0">
                <Tools />
                <div className="w-[1390px] shrink-0 flex flex-col">
                    <div className="flex">
                        <div className="w-[40px] shrink-0 bg-[#6a6a6a]" />
                        <TopRuler />
                    </div>
                    <div className="flex">
                        <LeftRuler />
                        <Canvas />
                    </div>
                </div>
                <Layers />
            </div>
            <Popover />
            <Marks />
        </div>
    );
}
